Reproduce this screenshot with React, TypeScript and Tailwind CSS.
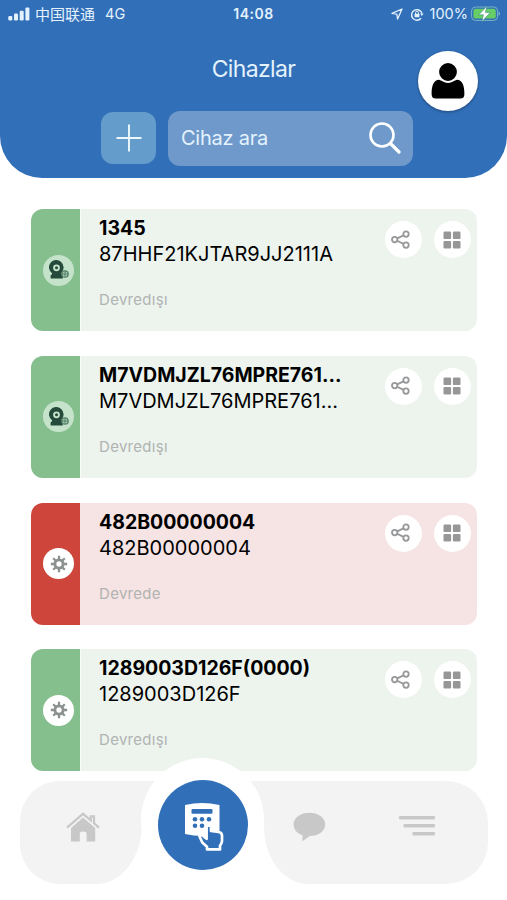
import React from 'react';

interface Device {
    name: string;
    serial: string;
    status: string;
    active: boolean;
    kind: 'camera' | 'gear';
}

const devices: Device[] = [
    { name: '1345', serial: '87HHF21KJTAR9JJ2111A', status: 'Devredışı', active: false, kind: 'camera' },
    { name: 'M7VDMJZL76MPRE761...', serial: 'M7VDMJZL76MPRE761...', status: 'Devredışı', active: false, kind: 'camera' },
    { name: '482B00000004', serial: '482B00000004', status: 'Devrede', active: true, kind: 'gear' },
    { name: '1289003D126F(0000)', serial: '1289003D126F', status: 'Devredışı', active: false, kind: 'gear' },
];

const StatusBar: React.FC = () => (
    <div className="flex h-7 items-center justify-between pl-2 pr-[6px] text-[13.5px] leading-none text-[#e4f2fd]">
        <div className="flex w-[180px] items-center">
            <svg width="22" height="14" viewBox="0 0 22 14" fill="currentColor">
                <rect x="0.3" y="9" width="4" height="4.5" rx="1.2" />
                <rect x="6" y="6.5" width="4" height="7" rx="1.2" />
                <rect x="11.7" y="3.7" width="4" height="9.8" rx="1.2" />
                <rect x="17.4" y="0.5" width="4" height="13" rx="1.2" />
            </svg>
            <span className="ml-[5px] font-['Inter','Noto_Sans_CJK_SC',sans-serif] text-[15px]">中国联通</span>
            <span className="ml-[10px] text-[14.5px]">4G</span>
        </div>
        <span className="pr-[2px] text-[14px] font-semibold tracking-[0.5px]">14:08</span>
        <div className="flex w-[180px] items-center justify-end">
            <svg width="12" height="12" viewBox="0 0 12 12" fill="none" stroke="currentColor" strokeWidth="1.3" strokeLinejoin="round">
                <path d="M11 1 L1 5.4 L5.8 6.2 L6.6 11 Z" />
            </svg>
            <svg className="ml-[7px]" width="14" height="13" viewBox="0 0 14 13" fill="none" stroke="currentColor" strokeWidth="1.4">
                <path d="M11 10.3 A5.3 5.3 0 1 1 11.9 5.2" />
                <path d="M10 5.4 L13.6 5.4 L11.9 8 Z" fill="currentColor" stroke="none" />
                <rect x="4.6" y="5.7" width="4.8" height="3.6" rx="0.5" fill="currentColor" stroke="none" />
                <path d="M5.6 6 V4.6 a1.4 1.4 0 0 1 2.8 0 V6" strokeWidth="1" />
            </svg>
            <span className="ml-[6px] text-[14.5px]">100%</span>
            <svg className="ml-[3px]" width="30" height="16" viewBox="0 0 30 16">
                <rect x="0.6" y="1" width="26" height="13.4" rx="3.8" fill="none" stroke="#79b5c6" strokeWidth="1" />
                <rect x="2.4" y="2.8" width="22.4" height="9.8" rx="2.2" fill="#67cd65" />
                <path d="M27.6 5.6 a2.4 2.4 0 0 1 0 4.4 Z" fill="#79b5c6" />
                <path d="M15.8 0.3 L7.8 8.8 H12.4 L11 15.5 L19.2 6.6 H14.4 Z" fill="#fff" stroke="#3f8f84" strokeWidth="0.6" />
            </svg>
        </div>
    </div>
);

const CameraIcon: React.FC = () => (
    <svg width="22" height="20" viewBox="0 0 22 20">
        <path d="M2.6 18.6 V15.2 C3.6 14.8 4 14.2 4.2 13.4 A7.3 7.3 0 1 1 13.4 12.6 L14.8 14 V18.6 Z" fill="#25493a" />
        <circle cx="8.5" cy="7.8" r="3.4" fill="#c5e3ca" />
        <circle cx="8.5" cy="7.8" r="1.5" fill="#25493a" />
        <circle cx="17" cy="14" r="3.2" fill="#a5cdb0" stroke="#56806a" strokeWidth="1.3" />
        <path d="M14 14 H20 M17 11.2 V16.8" stroke="#56806a" strokeWidth="1" />
    </svg>
);

const GearIcon: React.FC = () => (
    <svg width="18" height="18" viewBox="0 0 18 18" fill="none" stroke="#8b9290">
        <circle cx="9" cy="9" r="4.1" strokeWidth="2.9" />
        <path
            d="M9 0.8 V4 M9 14 V17.2 M0.8 9 H4 M14 9 H17.2 M3.2 3.2 L5.5 5.5 M12.5 12.5 L14.8 14.8 M3.2 14.8 L5.5 12.5 M12.5 5.5 L14.8 3.2"
            strokeWidth="2.3"
        />
    </svg>
);

const ShareIcon: React.FC = () => (
    <svg width="20" height="20" viewBox="0 0 20 20" fill="none" stroke="#97989a" strokeWidth="1.8">
        <circle cx="3.7" cy="9.6" r="2.7" />
        <circle cx="15" cy="4.1" r="2.7" />
        <circle cx="15" cy="15.1" r="2.7" />
        <path d="M6.2 8.4 L12.5 5.4 M6.2 10.8 L12.5 13.9" />
    </svg>
);

const GridIcon: React.FC = () => (
    <svg width="18" height="18" viewBox="0 0 18 18" fill="#979797">
        <rect x="0.5" y="0.5" width="7.6" height="7.6" rx="1.2" />
        <rect x="9.9" y="0.5" width="7.6" height="7.6" rx="1.2" />
        <rect x="0.5" y="9.9" width="7.6" height="7.6" rx="1.2" />
        <rect x="9.9" y="9.9" width="7.6" height="7.6" rx="1.2" />
    </svg>
);

const DeviceCard: React.FC<{ device: Device }> = ({ device }) => (
    <div className={`flex h-[122px] overflow-hidden rounded-xl ${device.active ? 'bg-[#f6e3e3]' : 'bg-[#edf4ee]'}`}>
        <div className={`flex w-[49px] shrink-0 items-center justify-center pl-1.5 ${device.active ? 'bg-[#cd453b]' : 'bg-[#86bf8e]'}`}>
            <div className={`flex size-[31px] items-center justify-center rounded-full ${device.kind === 'camera' ? 'bg-[#c5e3ca]' : 'bg-white'}`}>
                {device.kind === 'camera' ? <CameraIcon /> : <GearIcon />}
            </div>
        </div>
        <div className={`w-px shrink-0 ${device.active ? 'bg-[#f6e3e3]' : 'bg-[#f8fbf8]'}`} />
        <div className="flex-1 whitespace-nowrap pl-[18px] pt-[6px] text-black">
            <div className="text-[19.5px] font-bold leading-[26px]">{device.name}</div>
            <div className="text-[20px] leading-[26px]">{device.serial}</div>
            <div className="mt-[23px] text-[15px] leading-5 tracking-[0.3px] text-[#b0b3b1]">{device.status}</div>
        </div>
        <div className="flex gap-3 pr-[6px] pt-[12px]">
            <button className="flex size-[37px] items-center justify-center rounded-full bg-white pr-[5px]"><ShareIcon /></button>
            <button className="flex size-[37px] items-center justify-center rounded-full bg-white pr-px"><GridIcon /></button>
        </div>
    </div>
);

const BottomNav: React.FC = () => (
    <nav className="relative mt-[9.7px] flex h-[103px] pl-5 text-[#c8c8c8]">
        <div className="flex w-[122px] items-center justify-center rounded-l-[40px] rounded-br-[46px_60px] bg-[#f3f3f3] pb-3 pl-[3px]">
            <svg width="34" height="30" viewBox="0 0 34 30" fill="currentColor">
                <path d="M1 15.6 L17 1.8 L24.8 8.4 V4.4 H28 V11.2 L33 15.6" fill="none" stroke="currentColor" strokeWidth="2.2" />
                <path d="M17 5.5 L29.2 16 V29.6 H20.6 V21.5 Q20.6 19.5 17 19.5 Q13.8 19.5 13.8 21.5 V29.6 H5 V16 Z" />
            </svg>
        </div>
        <div className="h-8 w-[122px] bg-[#f3f3f3]" />
        <div className="flex w-[224px] items-center rounded-r-[42px] rounded-bl-[44px_58px] bg-[#f3f3f3] pb-3">
            <svg className="ml-[29px]" width="33" height="30" viewBox="0 0 33 30" fill="currentColor">
                <path d="M16.5 0.8 C7.6 0.8 0.6 5.6 0.6 12.4 C0.6 17.5 4.4 21.5 9.4 23 V29.2 L16.8 24 C25.6 23.8 32.2 19 32.2 12.4 C32.2 5.6 25.2 0.8 16.5 0.8 Z" />
            </svg>
            <svg className="ml-[73px]" width="36" height="22" viewBox="0 0 36 22" fill="currentColor">
                <rect x="0" y="0" width="36" height="3.6" rx="1" />
                <rect x="4.5" y="8" width="31.5" height="3.6" rx="1" />
                <rect x="13.5" y="16" width="22.5" height="3.6" rx="1" />
            </svg>
        </div>
        {/* raised active tab */}
        <div className="absolute left-[141px] top-[-23px] flex size-[123px] justify-center rounded-full bg-white pt-[22px]">
            <button className="flex size-[90px] items-center justify-center rounded-full bg-[#316fb8] pl-0.5 pt-1">
                <svg width="42" height="50" viewBox="0 0 42 50">
                    <path d="M2 3 Q19 -1 36.5 3 V30 H24 V34 Q12 34.5 2 32 Z" fill="#fff" />
                    <rect x="8.5" y="7" width="21" height="4.8" rx="1" fill="#316fb8" />
                    <g fill="#316fb8">
                        <circle cx="12" cy="17.2" r="2.3" />
                        <circle cx="19" cy="17.2" r="2.3" />
                        <circle cx="26" cy="17.2" r="2.3" />
                        <circle cx="12" cy="23.8" r="2.3" />
                        <circle cx="19" cy="23.8" r="2.3" />
                    </g>
                    <path
                        d="M23.6 25 Q25.8 21.8 28 25 V29 L35.5 30 Q39 30.6 39 33.4 V39 Q38.6 42 37 43.6 V47.4 H24 V44.8 L19.3 40.5 L16.4 34.2 Q18.6 32 21 34.6 L23.6 36.8 Z"
                        fill="#316fb8"
                        stroke="#fff"
                        strokeWidth="2.7"
                        strokeLinejoin="round"
                    />
                </svg>
            </button>
        </div>
    </nav>
);

export default function App() {
    return (
        <div className="h-[900px] w-[507px] overflow-hidden bg-white font-['Inter','Noto_Sans_CJK_SC',sans-serif]">
            <header className="relative h-[178px] rounded-b-[42px] bg-[#316fb8]">
                <StatusBar />
                <h1 className="mt-[25px] text-center text-[23px] leading-8 tracking-[-0.65px] text-[#e4f2fd]">Cihazlar</h1>
                <div className="mt-[25.5px] flex items-center gap-3 pl-[101px]">
                    <button className="flex h-[52px] w-[55px] items-center justify-center rounded-xl bg-[#649ccb]">
                        <svg width="26" height="28" viewBox="0 0 26 28" stroke="#edf8fe" strokeWidth="1.9">
                            <path d="M0.5 14 H25.5 M13 0.5 V27.5" />
                        </svg>
                    </button>
                    <div className="flex h-[55px] w-[245px] items-center justify-between rounded-xl bg-[#6e99ca] pl-[13px] pr-3">
                        <span className="text-[20px] tracking-[-0.25px] text-[#e4f2fd]">Cihaz ara</span>
                        <svg width="32" height="32" viewBox="0 0 32 32" fill="none" stroke="#fff" strokeLinecap="round">
                            <circle cx="13" cy="13" r="11.5" strokeWidth="2.6" />
                            <path d="M21.5 21.5 L30 30" strokeWidth="3.2" />
                        </svg>
                    </div>
                </div>
                <button className="absolute left-[418px] top-[51px] flex size-[60px] items-center justify-center rounded-full bg-white shadow-[0_1px_3px_rgba(0,0,0,0.35)]">
                    <svg width="34" height="38" viewBox="0 0 34 38" fill="#000">
                        <path d="M8 17.8 C10.5 18.4 13 21 17 21 C21 21 23.5 18.4 26 17.8 C31.5 18 33.4 24 33.4 32 Q33.4 36.6 29.4 36.6 H4.6 Q0.6 36.6 0.6 32 C0.6 24 2.5 18 8 17.8 Z" />
                        <circle cx="17" cy="10" r="9.6" stroke="#fff" strokeWidth="1.4" />
                    </svg>
                </button>
            </header>
            <main className="flex flex-col gap-[24.8px] pl-[31px] pr-[30px] pt-[31px]">
                {devices.map((device) => (
                    <DeviceCard key={device.name} device={device} />
                ))}
            </main>
            <BottomNav />
        </div>
    );
}
